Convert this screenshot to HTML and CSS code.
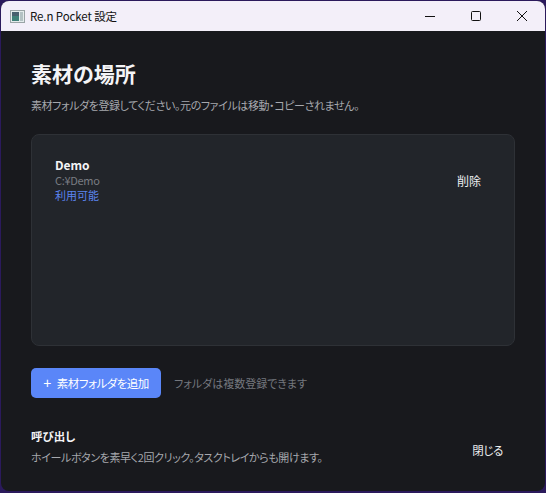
FILE: index.html
```html
<!DOCTYPE html>
<html lang="ja">
<head>
    <meta charset="UTF-8">
    <title>Re.n Pocket 設定</title>
    <link rel="stylesheet" href="styles.css">
</head>
<body>
    <div class="window">
        <div class="titlebar">
            <svg class="app-icon" width="15" height="13" viewBox="0 0 15 13">
                <rect x="0.5" y="0.5" width="14" height="12" fill="#e4ecec" stroke="#9aa4a6"/>
                <rect x="2" y="2" width="7" height="9" fill="#3f8078"/>
                <rect x="2" y="2" width="7" height="4" fill="#47606e"/>
                <rect x="10" y="2" width="3" height="9" fill="#b4c2c4"/>
            </svg>
            <span class="title-text">Re.n Pocket 設定</span>
            <div class="window-btns">
                <div class="window-btn">
                    <svg width="12" height="12" viewBox="0 0 12 12"><path d="M1 6.5H11" stroke="#111" stroke-width="1"/></svg>
                </div>
                <div class="window-btn">
                    <svg width="12" height="12" viewBox="0 0 12 12"><rect x="1.5" y="1.5" width="9" height="9" rx="1" fill="none" stroke="#111"/></svg>
                </div>
                <div class="window-btn">
                    <svg width="12" height="12" viewBox="0 0 12 12"><path d="M1 1L11 11M11 1L1 11" stroke="#111" stroke-width="1"/></svg>
                </div>
            </div>
        </div>
        <div class="content">
            <h1 class="heading">素材の場所</h1>
            <p class="subtext">素材フォルダを登録してください。元のファイルは移動・コピーされません。</p>
            <div class="folder-card">
                <div class="folder-row">
                    <div class="folder-info">
                        <div class="folder-name">Demo</div>
                        <div class="folder-path">C:¥Demo</div>
                        <div class="folder-status">利用可能</div>
                    </div>
                    <button class="text-btn">削除</button>
                </div>
            </div>
            <div class="add-row">
                <button class="add-btn"><span class="plus">+</span>素材フォルダを追加</button>
                <span class="add-hint">フォルダは複数登録できます</span>
            </div>
            <div class="footer">
                <div>
                    <div class="footer-title">呼び出し</div>
                    <div class="footer-text">ホイールボタンを素早く2回クリック。タスクトレイからも開けます。</div>
                </div>
                <button class="text-btn close-btn">閉じる</button>
            </div>
        </div>
    </div>
</body>
</html>
```

FILE: styles.css
```css
* {
    box-sizing: border-box;
}
html, body {
    height: 100%;
}
body {
    margin: 0;
    background-color: #2b1a5c;
    font-family: "Noto Sans CJK JP", "Noto Sans", sans-serif;
    font-feature-settings: "palt";
    overflow: hidden;
}
.window {
    margin: 1px 1px 0 1px;
    height: 490px;
    border-radius: 8px;
    overflow: hidden;
    background-color: #18191d;
    display: flex;
    flex-direction: column;
}
.titlebar {
    height: 30px;
    background-color: #f3eff9;
    display: flex;
    align-items: center;
    padding-left: 9px;
    color: #111;
    flex-shrink: 0;
}
.app-icon {
    margin-right: 5px;
}
.title-text {
    font-size: 11.5px;
    letter-spacing: -0.1px;
}
.window-btns {
    margin-left: auto;
    display: flex;
}
.window-btn {
    width: 46px;
    height: 30px;
    display: flex;
    align-items: center;
    justify-content: center;
}
.content {
    flex: 1;
    padding: 27px 30px 0 30px;
    display: flex;
    flex-direction: column;
}
.heading {
    margin: 0;
    font-size: 21px;
    line-height: 30px;
    font-weight: 700;
    color: #f4f4f6;
}
.subtext {
    margin: 8px 0 0 0;
    font-size: 11px;
    line-height: 18px;
    letter-spacing: -0.4px;
    color: #a6a8ad;
}
.folder-card {
    margin-top: 20px;
    height: 212px;
    background-color: #22252a;
    border: 1px solid #2e3136;
    border-radius: 8px;
    padding: 22px 23px 0 23px;
}
.folder-row {
    display: flex;
    justify-content: space-between;
    align-items: center;
}
.folder-name {
    font-size: 12px;
    line-height: 16px;
    font-weight: 700;
    color: #f4f4f6;
}
.folder-path {
    font-size: 11px;
    line-height: 15px;
    letter-spacing: -0.3px;
    color: #797c82;
}
.folder-status {
    font-size: 11px;
    line-height: 15px;
    color: #5b84f0;
}
.text-btn {
    background: none;
    border: none;
    padding: 0 10px;
    font-family: inherit;
    font-feature-settings: inherit;
    font-size: 12px;
    color: #eceef0;
}
.add-row {
    margin-top: 22px;
    display: flex;
    align-items: center;
}
.add-btn {
    width: 130px;
    height: 30px;
    background-color: #5a86f8;
    color: #fff;
    border: none;
    border-radius: 5px;
    padding: 0;
    font-family: inherit;
    font-feature-settings: inherit;
    font-size: 11.5px;
    letter-spacing: -0.5px;
}
.plus {
    font-family: "Liberation Sans", sans-serif;
    font-size: 14px;
    margin-right: 6px;
}
.add-hint {
    margin-left: 13px;
    font-size: 11px;
    color: #74777d;
}
.footer {
    margin-top: 30px;
    display: flex;
    justify-content: space-between;
    align-items: center;
}
.footer-title {
    font-size: 11.5px;
    line-height: 17px;
    font-weight: 700;
    color: #f4f4f6;
}
.footer-text {
    margin-top: 4px;
    font-size: 11px;
    line-height: 17px;
    letter-spacing: -0.4px;
    color: #a6a8ad;
}
.close-btn {
    margin-top: 6px;
    padding-right: 12px;
    font-size: 11.5px;
    letter-spacing: -0.4px;
}
```
